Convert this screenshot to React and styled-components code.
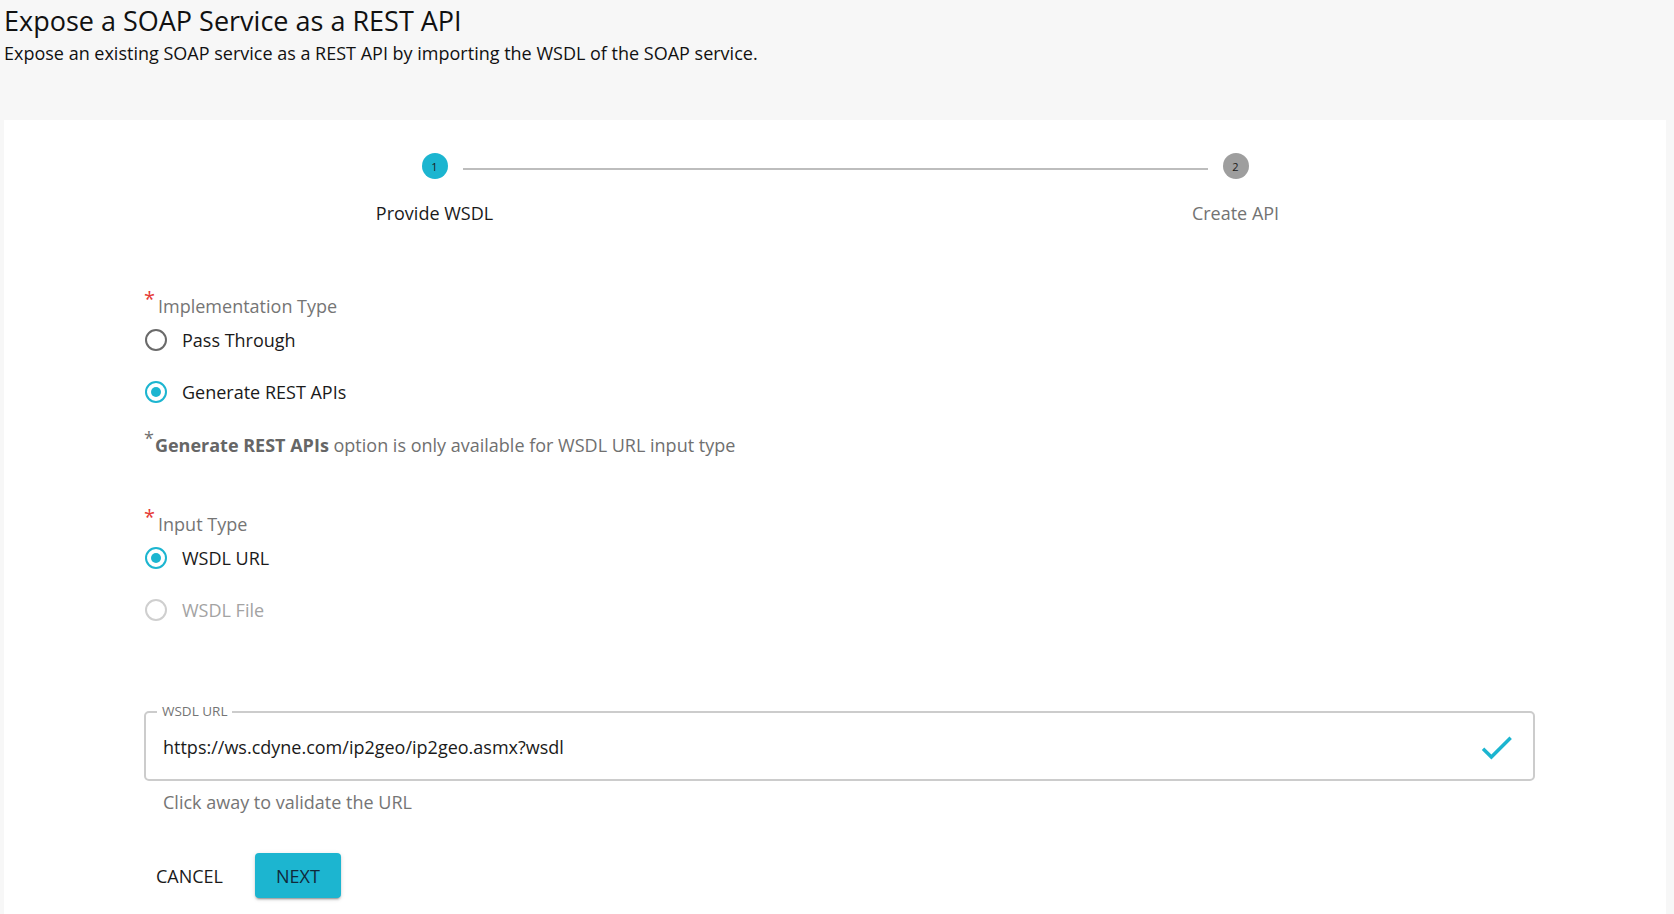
import React from 'react';
import styled, { createGlobalStyle } from 'styled-components';

const TEAL = '#1cb5d0';

const GlobalStyle = createGlobalStyle`
  html, body {
    margin: 0;
    padding: 0;
    background: #f7f7f7;
    font-family: "Open Sans", "Noto Sans", sans-serif;
    color: #1a1a1a;
  }
`;

const Page = styled.div`
  min-height: 914px;
  display: flex;
  flex-direction: column;
`;

const Header = styled.header`
  height: 120px;
  padding: 5px 4px 0;
  box-sizing: border-box;
`;

const Title = styled.h1`
  margin: 0;
  font-size: 27px;
  line-height: 32px;
  font-weight: 400;
  color: #111;
`;

const Subtitle = styled.p`
  margin: 4px 0 0;
  font-size: 18px;
  line-height: 24px;
  color: #111;
`;

const Card = styled.main`
  flex: 1;
  background: #fff;
  margin: 0 8px 0 4px;
  padding: 33px 30px 0;
`;

const Stepper = styled.div`
  display: flex;
`;

const Step = styled.div`
  flex: 1;
  display: flex;
  flex-direction: column;
  align-items: center;
`;

const StepTop = styled.div`
  align-self: stretch;
  display: flex;
  align-items: center;
  gap: 15px;
`;

const Connector = styled.div`
  flex: 1;
  height: 2px;
  margin-top: 5px;
  background: ${(p) => (p.$hidden ? 'transparent' : '#bdbdbd')};
`;

const StepCircle = styled.div`
  width: 26px;
  height: 26px;
  border-radius: 50%;
  background: ${(p) => (p.$active ? TEAL : '#9e9e9e')};
  color: #1a1a1a;
  font-size: 11px;
  display: flex;
  align-items: center;
  justify-content: center;
`;

const StepLabel = styled.div`
  margin-top: 22px;
  font-size: 18px;
  line-height: 24px;
  color: ${(p) => (p.$active ? '#1a1a1a' : '#737373')};
`;

const Form = styled.section`
  width: 1391px;
  margin: 69px 0 0 110px;
  display: flex;
  flex-direction: column;
`;

const FieldLabel = styled.div`
  font-size: 18px;
  line-height: 24px;
  color: #757575;
  margin-top: ${(p) => p.$top || 0}px;
`;

const Required = styled.span`
  color: #e53935;
  font-size: 20px;
  position: relative;
  top: -7px;
  margin-right: 3px;
`;

const RadioGroup = styled.div`
  display: flex;
  flex-direction: column;
  gap: 10px;
  margin-top: 1px;
`;

const RadioRow = styled.label`
  height: 42px;
  display: flex;
  align-items: center;
  gap: 15px;
  font-size: 18px;
  color: ${(p) => (p.$disabled ? '#a3a3a3' : '#1a1a1a')};
`;

const RadioCircle = styled.span`
  width: 22px;
  height: 22px;
  box-sizing: border-box;
  margin-left: 1px;
  border-radius: 50%;
  border: 2px solid
    ${(p) => (p.$checked ? TEAL : p.$disabled ? '#cfcfcf' : '#6a6a6a')};
  display: flex;
  align-items: center;
  justify-content: center;

  &::after {
    content: '';
    width: 10px;
    height: 10px;
    border-radius: 50%;
    background: ${(p) => (p.$checked ? TEAL : 'transparent')};
  }
`;

const Note = styled.div`
  margin-top: 20px;
  font-size: 18px;
  line-height: 24px;
  color: #707070;

  b {
    font-weight: 700;
    color: #666;
  }
`;

const NoteStar = styled.span`
  color: #707070;
  position: relative;
  top: -7px;
  margin-right: 1px;
`;

const UrlField = styled.fieldset`
  margin: 72px 0 0;
  padding: 15px 11px 20px;
  border: 2px solid #cccccc;
  border-radius: 5px;
  min-width: 0;
`;

const Legend = styled.legend`
  padding: 0 5px;
  font-size: 13.5px;
  line-height: 17px;
  color: #757575;
`;

const UrlRow = styled.div`
  height: 24px;
  display: flex;
  align-items: center;
`;

const UrlInput = styled.input`
  flex: 1;
  border: none;
  outline: none;
  padding: 0 0 0 6px;
  font-family: inherit;
  font-size: 18px;
  line-height: 24px;
  color: #1a1a1a;
  background: transparent;
`;

const CheckMark = styled.svg`
  width: 41px;
  height: 41px;
  margin: -8px 5px -8px 0;
  fill: ${TEAL};
`;

const Helper = styled.div`
  margin: 9px 0 0 19px;
  font-size: 18px;
  line-height: 24px;
  color: #757575;
`;

const Actions = styled.div`
  margin-top: 39px;
  display: flex;
  align-items: center;
  gap: 20px;
`;

const Button = styled.button`
  height: 45px;
  padding: 0 ${(p) => (p.$primary ? 21 : 12)}px;
  border: none;
  border-radius: 4px;
  font-family: inherit;
  font-size: 18px;
  text-transform: uppercase;
  color: ${(p) => (p.$primary ? '#10293a' : '#1a1a1a')};
  background: ${(p) => (p.$primary ? TEAL : 'transparent')};
  box-shadow: ${(p) =>
    p.$primary
      ? '0 3px 1px -2px rgba(0,0,0,0.2), 0 2px 2px 0 rgba(0,0,0,0.14), 0 1px 5px 0 rgba(0,0,0,0.12)'
      : 'none'};
  cursor: pointer;
`;

const Radio = ({ label, checked, disabled }) => (
  <RadioRow $disabled={disabled}>
    <RadioCircle $checked={checked} $disabled={disabled} />
    {label}
  </RadioRow>
);

export default function App() {
  return (
    <Page>
      <GlobalStyle />
      <Header>
        <Title>Expose a SOAP Service as a REST API</Title>
        <Subtitle>
          Expose an existing SOAP service as a REST API by importing the WSDL of the SOAP service.
        </Subtitle>
      </Header>
      <Card>
        <Stepper>
          <Step>
            <StepTop>
              <Connector $hidden />
              <StepCircle $active>1</StepCircle>
              <Connector />
            </StepTop>
            <StepLabel $active>Provide WSDL</StepLabel>
          </Step>
          <Step>
            <StepTop>
              <Connector />
              <StepCircle>2</StepCircle>
              <Connector $hidden />
            </StepTop>
            <StepLabel>Create API</StepLabel>
          </Step>
        </Stepper>

        <Form>
          <FieldLabel>
            <Required>*</Required>Implementation Type
          </FieldLabel>
          <RadioGroup>
            <Radio label="Pass Through" />
            <Radio label="Generate REST APIs" checked />
          </RadioGroup>
          <Note>
            <NoteStar>*</NoteStar>
            <b>Generate REST APIs</b> option is only available for WSDL URL input type
          </Note>

          <FieldLabel $top={55}>
            <Required>*</Required>Input Type
          </FieldLabel>
          <RadioGroup>
            <Radio label="WSDL URL" checked />
            <Radio label="WSDL File" disabled />
          </RadioGroup>

          <UrlField>
            <Legend>WSDL URL</Legend>
            <UrlRow>
              <UrlInput defaultValue="https://ws.cdyne.com/ip2geo/ip2geo.asmx?wsdl" />
              <CheckMark viewBox="0 0 24 24">
                <path d="M9 16.17L4.83 12l-1.42 1.41L9 19 21 7l-1.41-1.41z" />
              </CheckMark>
            </UrlRow>
          </UrlField>
          <Helper>Click away to validate the URL</Helper>

          <Actions>
            <Button>Cancel</Button>
            <Button $primary>Next</Button>
          </Actions>
        </Form>
      </Card>
    </Page>
  );
}
